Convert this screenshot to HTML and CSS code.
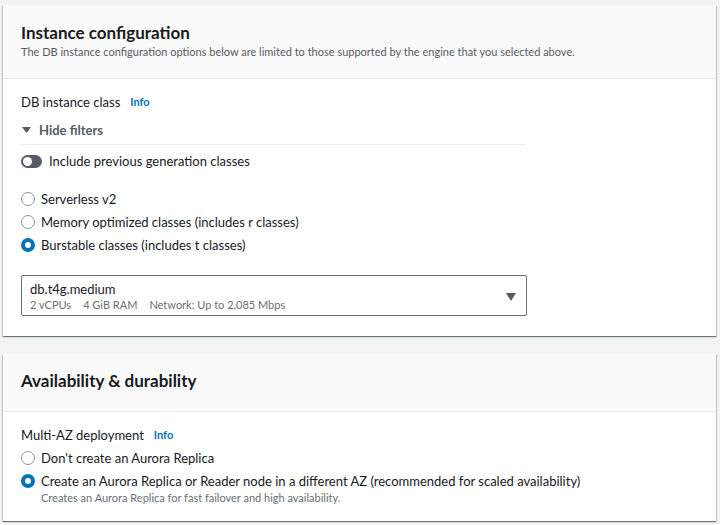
FILE: index.html
```html
<!DOCTYPE html>
<html>
<head>
<meta charset="utf-8">
<link rel="stylesheet" href="styles.css">
</head>
<body>
<div class="page">
  <section class="card">
    <div class="card-header">
      <h2 class="title">Instance configuration</h2>
      <p class="desc">The DB instance configuration options below are limited to those supported by the engine that you selected above.</p>
    </div>
    <div class="card-body body1">
      <div class="field-label">DB instance class <span class="info">Info</span></div>
      <div class="filters">
        <div class="filters-toggle">
          <svg class="caret" width="9" height="6" viewBox="0 0 9 6"><path d="M0 0H9L4.5 6Z" fill="#545b64"/></svg>
          <span>Hide filters</span>
        </div>
        <div class="toggle-row">
          <span class="switch"><span class="knob"></span></span>
          <span>Include previous generation classes</span>
        </div>
      </div>
      <div class="radios">
        <div class="radio-row"><span class="radio"></span><span>Serverless v2</span></div>
        <div class="radio-row"><span class="radio"></span><span>Memory optimized classes (includes r classes)</span></div>
        <div class="radio-row"><span class="radio checked"></span><span>Burstable classes (includes t classes)</span></div>
      </div>
      <div class="select">
        <div class="select-text">
          <div class="select-main">db.t4g.medium</div>
          <div class="select-sub"><span>2 vCPUs</span><span>4 GiB RAM</span><span>Network: Up to 2,085 Mbps</span></div>
        </div>
        <svg class="select-caret" width="10" height="8" viewBox="0 0 10 8"><path d="M0 0H10L5 8Z" fill="#545b64"/></svg>
      </div>
    </div>
  </section>
  <section class="card card2">
    <div class="card-header header2">
      <h2 class="title">Availability &amp; durability</h2>
    </div>
    <div class="card-body body2">
      <div class="field-label">Multi-AZ deployment <span class="info">Info</span></div>
      <div class="radios tight">
        <div class="radio-row"><span class="radio"></span><span>Don't create an Aurora Replica</span></div>
        <div class="radio-row"><span class="radio checked"></span><span>Create an Aurora Replica or Reader node in a different AZ (recommended for scaled availability)</span></div>
        <div class="radio-desc">Creates an Aurora Replica for fast failover and high availability.</div>
      </div>
    </div>
  </section>
</div>
</body>
</html>
```
FILE: styles.css
```css
* { box-sizing: border-box; }
html, body { margin: 0; padding: 0; }
body {
  background: #f2f3f3;
  font-family: Lato, "Open Sans", "Liberation Sans", sans-serif;
  color: #16191f;
  width: 720px;
  height: 525px;
  overflow: hidden;
}
.page {
  padding: 5px 4px 0 3px;
  display: flex;
  flex-direction: column;
  gap: 18px;
}
.card {
  background: #fff;
  box-shadow: 0 1px 1px 0 rgba(0,28,36,.4), 1px 1px 1px 0 rgba(0,28,36,.15), -1px 1px 1px 0 rgba(0,28,36,.15);
}
.card-header {
  background: #fafafa;
  border-bottom: 1px solid #eaeded;
  padding: 17px 18px 18px 18px;
}
.header2 { padding: 16px 18px 19px 18px; }
.title {
  margin: 0;
  font-size: 17px;
  line-height: 22px;
  font-weight: 700;
}
.desc {
  margin: 0;
  font-size: 11px;
  line-height: 16px;
  color: #545b64;
}
.card-body { padding: 13px 18px 20px 18px; }
.body2 { padding-bottom: 16px; }
.field-label {
  font-size: 13px;
  line-height: 20px;
  display: flex;
  align-items: center;
  gap: 10px;
}
.info {
  font-size: 11px;
  font-weight: 700;
  color: #0073bb;
}
.filters {
  width: 505px;
  margin-top: 8px;
}
.filters-toggle {
  display: flex;
  align-items: center;
  gap: 8px;
  font-size: 13px;
  line-height: 20px;
  font-weight: 700;
  color: #545b64;
  padding-left: 1px;
  border-bottom: 1px solid #eaeded;
  padding-bottom: 4px;
}
.toggle-row {
  display: flex;
  align-items: center;
  gap: 7px;
  font-size: 13px;
  line-height: 20px;
  margin-top: 6px;
}
.switch {
  width: 21px;
  height: 13px;
  border-radius: 7px;
  background: #545b64;
  position: relative;
  flex: none;
}
.knob {
  position: absolute;
  left: 2px;
  top: 2px;
  width: 9px;
  height: 9px;
  border-radius: 50%;
  background: #fff;
}
.radios {
  margin-top: 18px;
  display: flex;
  flex-direction: column;
  gap: 3px;
}
.radios.tight { margin-top: 3px; }
.radio-row {
  display: flex;
  align-items: center;
  gap: 6px;
  font-size: 13px;
  line-height: 20px;
}
.radio {
  width: 14px;
  height: 14px;
  border-radius: 50%;
  border: 1.5px solid #879596;
  flex: none;
}
.radio.checked {
  border: 4.5px solid #0073bb;
  background: #fff;
}
.radio-desc {
  font-size: 11px;
  line-height: 14px;
  color: #687078;
  padding-left: 20px;
  margin-top: -3px;
}
.select {
  margin-top: 20px;
  width: 506px;
  border: 1px solid #687078;
  border-radius: 2px;
  padding: 4px 10px 3px 8px;
  display: flex;
  align-items: center;
  justify-content: space-between;
}
.select-main {
  font-size: 13px;
  line-height: 18px;
}
.select-sub {
  font-size: 11px;
  line-height: 14px;
  color: #687078;
  display: flex;
  gap: 12px;
}
.select-caret { margin-top: 2px; }
```
